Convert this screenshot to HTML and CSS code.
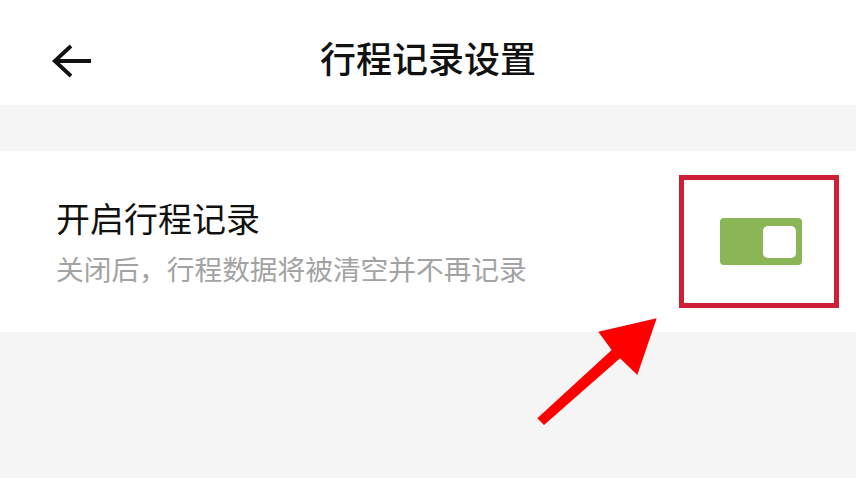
FILE: index.html
```html
<!DOCTYPE html>
<html lang="zh-CN">

<head>
    <meta charset="UTF-8">
    <title>行程记录设置</title>
    <meta name="viewport" content="width=device-width, initial-scale=1.0">
    <link rel="stylesheet" href="styles.css">
</head>

<body>
    <div class="page">
        <header class="top-bar">
            <button class="back-btn" aria-label="返回">
                <svg width="40" height="34" viewBox="0 0 40 34">
                    <path d="M39 17H3M19 2L2.8 17L19 32" fill="none" stroke="#111" stroke-width="3.8"
                        stroke-linecap="butt" stroke-linejoin="miter" />
                </svg>
            </button>
            <h1 class="title">行程记录设置</h1>
        </header>

        <div class="gap"></div>

        <section class="setting-row">
            <div class="setting-text">
                <div class="setting-label">开启行程记录</div>
                <div class="setting-desc">关闭后，行程数据将被清空并不再记录</div>
            </div>
            <div class="highlight-box">
                <div class="toggle on">
                    <span class="knob"></span>
                </div>
            </div>
        </section>

        <!-- 标注箭头 -->
        <svg class="pointer" width="140" height="125" viewBox="0 0 140 125">
            <polygon points="9.3,114.3 83.7,46 70.3,27.7 128.7,14.3 109.3,71 92,54.3 16,121" fill="#ff0000" />
        </svg>
    </div>
</body>

</html>
```

FILE: styles.css
```css
body {
    margin: 0;
    padding: 0;
    background: #f5f5f5;
    font-family: "Noto Sans CJK SC", "Noto Sans", sans-serif;
}

.page {
    position: relative;
    width: 856px;
    height: 478px;
    overflow: hidden;
}

.top-bar {
    height: 105px;
    background: #fff;
    display: flex;
    align-items: center;
    justify-content: center;
    position: relative;
}

.back-btn {
    position: absolute;
    left: 52px;
    top: 44px;
    padding: 0;
    border: none;
    background: none;
    line-height: 0;
    cursor: pointer;
}

.title {
    margin: 0;
    font-size: 36px;
    font-weight: 500;
    color: #111;
    line-height: 40px;
    padding-top: 8px;
}

.gap {
    height: 46px;
}

.setting-row {
    height: 181px;
    background: #fff;
    display: flex;
    align-items: center;
    justify-content: space-between;
    padding: 0 17px 0 56px;
}

.setting-text {
    display: flex;
    flex-direction: column;
    gap: 13px;
}

.setting-label {
    font-size: 34px;
    line-height: 40px;
    color: #111;
}

.setting-desc {
    font-size: 27.7px;
    line-height: 34px;
    color: #a3a3a3;
}

.highlight-box {
    width: 147px;
    height: 123px;
    border: 5px solid #cf1f37;
    display: flex;
    align-items: center;
    justify-content: center;
    padding-left: 3px;
    box-sizing: content-box;
}

.toggle {
    width: 82px;
    height: 47px;
    border-radius: 4px;
    background: #8bb656;
    display: flex;
    align-items: center;
    justify-content: flex-end;
    padding-right: 6px;
    box-sizing: border-box;
}

.knob {
    width: 33px;
    height: 32px;
    border-radius: 5px;
    background: #fff;
}

.pointer {
    position: absolute;
    left: 528px;
    top: 304px;
}
```
